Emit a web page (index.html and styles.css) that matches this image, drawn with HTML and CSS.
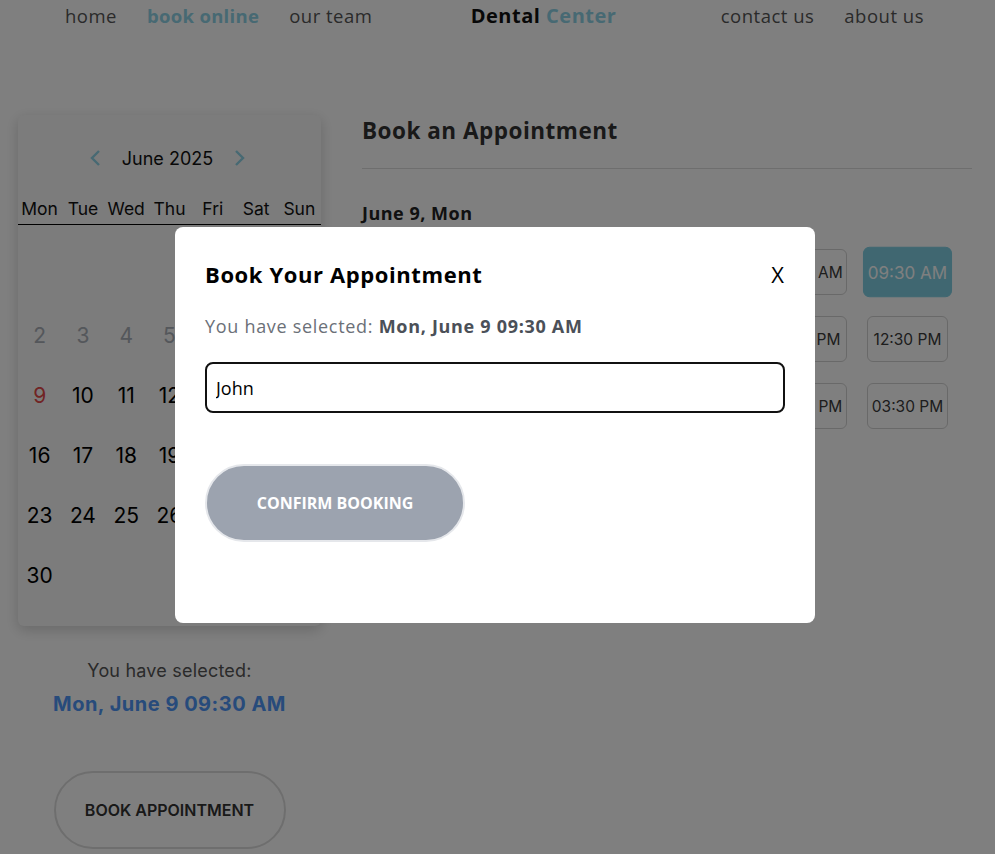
FILE: index.html
```html
<!DOCTYPE html>
<html lang="en">
<head>
<meta charset="utf-8">
<title>Dental Center - Book online</title>
<link rel="stylesheet" href="styles.css">
</head>
<body>
<nav class="nav">
  <div class="nav-group">
    <a class="nav-link" href="#">home</a>
    <a class="nav-link active" href="#">book online</a>
    <a class="nav-link" href="#">our team</a>
  </div>
  <div class="logo">Dental <span class="logo-accent">Center</span></div>
  <div class="nav-group">
    <a class="nav-link" href="#">contact us</a>
    <a class="nav-link" href="#">about us</a>
  </div>
</nav>

<main class="main">
  <section class="left">
    <div class="calendar">
      <div class="cal-head">
        <span class="chev">
          <svg width="14" height="18" viewBox="0 0 14 18"><path d="M11 2 L4 9 L11 16" fill="none" stroke="currentColor" stroke-width="2.4"/></svg>
        </span>
        <span class="cal-month">June 2025</span>
        <span class="chev">
          <svg width="14" height="18" viewBox="0 0 14 18"><path d="M3 2 L10 9 L3 16" fill="none" stroke="currentColor" stroke-width="2.4"/></svg>
        </span>
      </div>
      <div class="weekdays">
        <span>Mon</span><span>Tue</span><span>Wed</span><span>Thu</span><span>Fri</span><span>Sat</span><span>Sun</span>
      </div>
      <div class="days">
        <span></span><span></span><span></span><span></span><span></span><span></span><span class="day">1</span>
        <span class="day past">2</span><span class="day past">3</span><span class="day past">4</span><span class="day past">5</span><span class="day past">6</span><span class="day past">7</span><span class="day past">8</span>
        <span class="day today">9</span><span class="day">10</span><span class="day">11</span><span class="day">12</span><span class="day">13</span><span class="day">14</span><span class="day">15</span>
        <span class="day">16</span><span class="day">17</span><span class="day">18</span><span class="day">19</span><span class="day">20</span><span class="day">21</span><span class="day">22</span>
        <span class="day">23</span><span class="day">24</span><span class="day">25</span><span class="day">26</span><span class="day">27</span><span class="day">28</span><span class="day">29</span>
        <span class="day">30</span>
      </div>
    </div>
    <p class="sel-label">You have selected:</p>
    <p class="sel-value">Mon, June 9 09:30 AM</p>
    <button class="book-btn">BOOK APPOINTMENT</button>
  </section>

  <section class="right">
    <h1 class="title">Book an Appointment</h1>
    <h2 class="date">June 9, Mon</h2>
    <div class="slots">
      <button class="slot">07:00 AM</button>
      <button class="slot">07:30 AM</button>
      <button class="slot">08:00 AM</button>
      <button class="slot">08:30 AM</button>
      <button class="slot">09:00 AM</button>
      <button class="slot selected">09:30 AM</button>
      <button class="slot">10:00 AM</button>
      <button class="slot">10:30 AM</button>
      <button class="slot">11:00 AM</button>
      <button class="slot">11:30 AM</button>
      <button class="slot">12:00 PM</button>
      <button class="slot">12:30 PM</button>
      <button class="slot">01:00 PM</button>
      <button class="slot">01:30 PM</button>
      <button class="slot">02:00 PM</button>
      <button class="slot">02:30 PM</button>
      <button class="slot">03:00 PM</button>
      <button class="slot">03:30 PM</button>
    </div>
  </section>
</main>

<div class="overlay">
  <div class="modal">
    <div class="modal-head">
      <h3 class="modal-title">Book Your Appointment</h3>
      <span class="close">X</span>
    </div>
    <p class="modal-sel">You have selected: <strong>Mon, June 9 09:30 AM</strong></p>
    <input class="name-input" type="text" value="John">
    <button class="confirm-btn">CONFIRM BOOKING</button>
  </div>
</div>
</body>
</html>
```

FILE: styles.css
```css
* { box-sizing: border-box; }

html, body {
  margin: 0;
  padding: 0;
  background: #ffffff;
  height: 854px;
  overflow: hidden;
}

body {
  font-family: "Open Sans", "Liberation Sans", sans-serif;
  color: #000;
}

.nav {
  display: flex;
  justify-content: space-between;
  align-items: center;
  height: 31px;
  padding: 0 71px 0 65px;
}

.nav-group {
  display: flex;
  gap: 30px;
}

.nav-link {
  font-size: 18.5px;
  letter-spacing: 0.5px;
  color: #555;
  text-decoration: none;
}

.nav-link.active {
  color: #8ed3e6;
  font-weight: 700;
  letter-spacing: 0.3px;
}

.logo {
  font-size: 20px;
  font-weight: 700;
  letter-spacing: 0.5px;
  color: #111;
  margin-left: -6px;
}

.logo-accent { color: #8ed3e6; }

.main {
  display: flex;
  gap: 41px;
  padding: 84px 23px 0 18px;
}

.left {
  width: 303px;
  flex: none;
  display: flex;
  flex-direction: column;
  align-items: center;
  font-family: "Inter", "Open Sans", sans-serif;
}

.calendar {
  width: 303px;
  background: #f8f8f8;
  border-radius: 6px;
  box-shadow: 0 4px 14px rgba(0, 0, 0, 0.18);
  padding: 30px 0 21px;
}

.cal-head {
  display: flex;
  justify-content: center;
  align-items: center;
  gap: 20px;
  height: 26px;
  margin-left: -4px;
}

.chev {
  color: #8ed3e6;
  display: flex;
}

.cal-month {
  font-size: 18px;
  color: #111;
}

.weekdays {
  display: grid;
  grid-template-columns: repeat(7, 1fr);
  margin-top: 27px;
  padding-bottom: 5px;
  border-bottom: 1.5px solid #000;
  font-size: 17.5px;
  text-align: center;
  color: #111;
}

.days {
  display: grid;
  grid-template-columns: repeat(7, 1fr);
  grid-auto-rows: 60px;
  margin-top: 20px;
}

.day {
  display: flex;
  align-items: center;
  justify-content: center;
  font-size: 21px;
  color: #000;
}

.day.past { color: #a9aeb6; }
.day.today { color: #e24848; }

.sel-label {
  margin: 34px 0 0;
  font-size: 18px;
  letter-spacing: 0.2px;
  color: #555;
}

.sel-value {
  margin: 11px 0 0;
  font-size: 20px;
  font-weight: 700;
  letter-spacing: 0.5px;
  color: #4f96f7;
}

.book-btn {
  margin-top: 55px;
  width: 232px;
  height: 78px;
  border-radius: 39px;
  border: 2px solid #dddddd;
  background: transparent;
  font-family: "Inter", "Open Sans", sans-serif;
  font-size: 16px;
  font-weight: 600;
  color: #333;
}

.right {
  flex: 1;
}

.title {
  margin: 0;
  font-size: 22.5px;
  font-weight: 700;
  letter-spacing: 0.5px;
  color: #333;
  padding: 0 0 22px;
  border-bottom: 1px solid #dddddd;
}

.date {
  margin: 32px 0 0;
  font-size: 18px;
  font-weight: 700;
  letter-spacing: 0.5px;
  color: #222;
}

.slots {
  display: grid;
  grid-template-columns: repeat(6, 81px);
  column-gap: 20px;
  row-gap: 21px;
  margin-top: 24px;
}

.slot {
  height: 46px;
  border: 1px solid #d2d2d2;
  border-radius: 6px;
  background: #fff;
  font-family: "Inter", "Open Sans", sans-serif;
  font-size: 15.5px;
  color: #3a3a3a;
  padding: 0;
}

.slot.selected {
  background: #80cfe3;
  border-color: #80cfe3;
  color: #fff;
  transform: scale(1.1);
}

.overlay {
  position: fixed;
  inset: 0;
  background: rgba(0, 0, 0, 0.5);
  display: flex;
  align-items: center;
  justify-content: center;
  padding-right: 5px;
  padding-bottom: 4px;
}

.modal {
  width: 640px;
  height: 396px;
  background: #fff;
  border-radius: 8px;
  padding: 32px 30px 30px;
}

.modal-head {
  display: flex;
  justify-content: space-between;
  align-items: center;
}

.modal-title {
  margin: 0;
  font-size: 22px;
  font-weight: 700;
  letter-spacing: 0.6px;
  color: #000;
}

.close {
  font-size: 22px;
  color: #000;
  margin-right: 1px;
}

.modal-sel {
  margin: 25px 0 0;
  font-size: 18px;
  letter-spacing: 0.7px;
  color: #6b7078;
}

.modal-sel strong {
  color: #4b5058;
}

.name-input {
  display: block;
  width: 580px;
  height: 51px;
  margin-top: 24px;
  border: 2px solid #111;
  border-radius: 8px;
  padding: 0 9px;
  font-family: "Open Sans", "Liberation Sans", sans-serif;
  font-size: 18px;
  color: #000;
  outline: none;
}

.confirm-btn {
  display: block;
  margin-top: 51px;
  width: 260px;
  height: 78px;
  border-radius: 39px;
  border: 2px solid #e5e7eb;
  background: #9ca3af;
  color: #fff;
  font-family: "Open Sans", "Liberation Sans", sans-serif;
  font-size: 16px;
  font-weight: 700;
}
```
